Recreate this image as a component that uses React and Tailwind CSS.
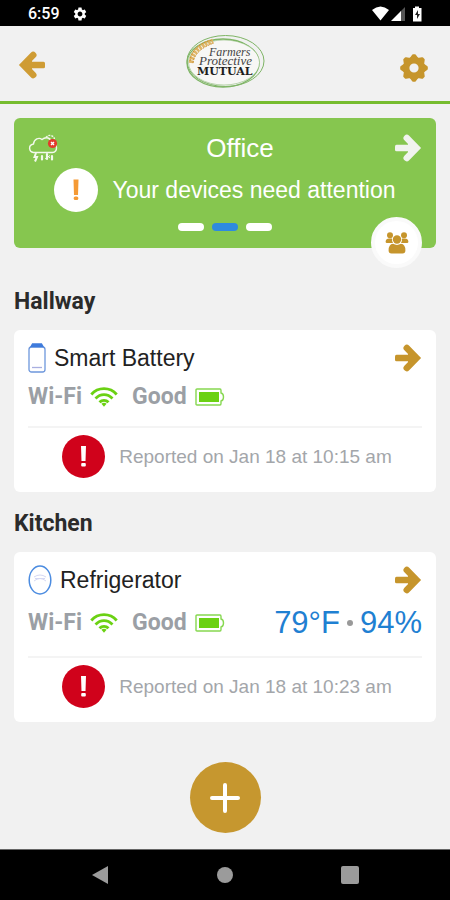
import React from 'react';
import { MdSettings } from 'react-icons/md';

const devices = [
    {
        id: 1,
        room: 'Hallway',
        name: 'Smart Battery',
        icon: 'battery',
        battery: 'Good',
        reported: 'Reported on Jan 18 at 10:15 am',
    },
    {
        id: 2,
        room: 'Kitchen',
        name: 'Refrigerator',
        icon: 'sensor',
        battery: 'Good',
        temperature: '79°F',
        humidity: '94%',
        reported: 'Reported on Jan 18 at 10:23 am',
    },
];

/**
 * Thick arrow, points right by default
 */
function ArrowIcon({ className }) {
    return (
        <svg viewBox="0 0 28 28" fill="none" stroke="currentColor" className={className} aria-hidden="true">
            <path d="M12.800 4 22.500 14 12.800 24" strokeWidth="6.600" strokeLinecap="round" strokeLinejoin="miter" />
            <path d="M14 6V22L21 14Z" fill="currentColor" stroke="none" />
            <rect x="1" y="10.800" width="20" height="6.400" rx="1.500" fill="currentColor" stroke="none" />
        </svg>
    );
}

/**
 * Gear with eight short teeth
 */
function GearIcon({ className }) {
    const angles = [0, 45, 90, 135];

    return (
        <svg viewBox="0 0 28 28" fill="none" stroke="currentColor" className={className} aria-hidden="true">
            <circle cx="14" cy="14" r="7.800" strokeWidth="6.400" />
            {angles.map((angle) => (
                <g key={angle} transform={`rotate(${angle} 14 14)`} fill="currentColor" stroke="none">
                    <path d="M9.400 4.400 12 .900Q12.400 .200 13 .200H15Q15.600 .200 16 .900L18.600 4.400Z" />
                    <path d="M9.400 23.600 12 27.100Q12.400 27.800 13 27.800H15Q15.600 27.800 16 27.100L18.600 23.600Z" />
                </g>
            ))}
        </svg>
    );
}

function Logo() {
    return (
        <svg viewBox="0 0 80 56" className="w-20 h-14" role="img" aria-label="Farmers Protective Mutual">
            <g fill="none" stroke="#7fb566">
                <ellipse cx="40.5" cy="27" rx="38.5" ry="25.5" strokeWidth="1" />
                <ellipse cx="38" cy="29" rx="36" ry="24" strokeWidth="1.3" />
                <ellipse cx="39" cy="28.5" rx="35.5" ry="22.5" strokeWidth=".5" fill="#f7f7f5" />
            </g>
            <path d="M6 29C7 18 15 11 28 7" fill="none" stroke="#e0b566" strokeWidth="4.5" strokeDasharray="2.6 .9" />
            <path d="M5 27C6 17 14 9 27 6M8 29C9 20 17 13 29 9" fill="none" stroke="#cc9233" strokeWidth="1" strokeDasharray="2 1" />
            <g fill="#444" fontFamily='"Liberation Serif", serif'>
                <text x="24" y="22" fontSize="12" fontStyle="italic">Farmers</text>
                <text x="14" y="31" fontSize="13" fontStyle="italic">Protective</text>
                <text x="12" y="41" fontSize="11" fill="#1d1d1d" fontFamily='"DejaVu Serif", serif' fontWeight="bold">MUTUAL</text>
            </g>
        </svg>
    );
}

function StormIcon() {
    return (
        <svg viewBox="0 0 30 28" className="w-[30px] h-7" fill="none" stroke="#f2f9ec" strokeWidth="1.4" aria-hidden="true">
            <path d="M18 3.5Q20 .8 23 1.6Q26 2.4 26.5 5" strokeDasharray="2 1" />
            <path d="M5.5 18.5C.8 17.8-.2 11 5.5 10C6 5 11 3 14 5.500C18 2 23 4 23.500 8.500C30 9 30 18.500 24.500 18.500Z" />
            <path d="M8 19 6.500 23H9L7 27.500" strokeWidth="2" />
            <path d="M14 22V25.500M19 20V25M24 22V25.500" strokeWidth="2.200" strokeLinecap="round" />
            <path d="M19 21.500 22 24M22 21.500 17 25" strokeWidth="1" />
            <circle cx="24.500" cy="9.500" r="4.600" fill="#e33a2c" stroke="none" />
            <path d="M23 8 26 11M26 8 23 11" stroke="#fff" />
        </svg>
    );
}

function MembersIcon() {
    return (
        <svg viewBox="0 0 24 24" className="w-6 h-6" fill="currentColor" aria-hidden="true">
            <circle cx="5" cy="4.300" r="3" />
            <circle cx="19" cy="4.300" r="3" />
            <path d="M.6 10.500Q1 7.500 4 7.500H7Q6.800 11 8 12H2Q.5 12 .6 10.500Z" />
            <path d="M23.400 10.500Q23 7.500 20 7.500H17Q17.200 11 16 12H22Q23.500 12 23.400 10.500Z" />
            <circle cx="12" cy="8.500" r="4.200" />
            <path d="M3.600 19.500Q3.600 13.200 8 12.800Q12 15 16 12.800Q20.400 13.200 20.400 19.500Q20.400 22.500 17.500 22.500H6.500Q3.600 22.500 3.600 19.500Z" />
        </svg>
    );
}

function WifiIcon() {
    return (
        <svg viewBox="0 0 28 20" className="w-7 h-5" fill="none" stroke="#6bd113" strokeWidth="2.800" aria-hidden="true">
            <path d="M1.300 7.500C8-.3 20-.3 26.700 7.500" />
            <path d="M5.500 11.500C10.500 6.300 17.500 6.300 22.500 11.500" />
            <path d="M9.500 15.300C12 12.700 16 12.700 18.500 15.300" />
            <path d="M11.400 16.800Q14 14.900 16.600 16.800L14 19.800Z" fill="#6bd113" stroke="none" />
        </svg>
    );
}

function BatteryIcon() {
    return (
        <svg viewBox="0 0 30 18" className="w-[30px] h-[18px]" fill="none" stroke="#86d850" strokeWidth="1.400" aria-hidden="true">
            <path d="M2 1H25Q26 1 26 2.500V5Q28.500 5.500 28.500 9Q28.500 12.500 26 13V15.500Q26 17 25 17H2Q1 17 1 16V2Q1 1 2 1Z" />
            <rect x="4" y="4" width="20" height="10" fill="#6bd113" stroke="none" />
        </svg>
    );
}

function DeviceIcon({ type }) {
    if (type === 'battery') {
        return (
            <svg viewBox="0 0 18 30" className="w-[18px] h-[30px]" fill="none" stroke="#6d97dc" strokeWidth="1.300" aria-hidden="true">
                <rect x="1" y="4" width="16" height="25" rx="2.500" />
                <path d="M3 3.500 4.500 1H13.500L15 3.500Z" fill="#3f7bdc" stroke="#3f7bdc" />
                <path d="M4 24.500H14" stroke="#a9afe0" />
            </svg>
        );
    }

    return (
        <svg viewBox="0 0 24 30" className="w-6 h-[30px]" fill="none" stroke="#4c8ce0" strokeWidth="1.500" aria-hidden="true">
            <ellipse cx="12" cy="15" rx="10.800" ry="14" />
            <path d="M6 12Q12 8 18 12M6 16Q12 11 18 16M7 13.500H17" stroke="#d5d8f3" strokeWidth="1" />
        </svg>
    );
}

/**
 * Android status bar
 */
function StatusBar() {
    return (
        <div className="h-[26px] bg-black text-white flex items-center justify-between pl-7 pr-[27px] pt-px">
            <div className="flex items-center gap-3">
                <span className="font-[Roboto,sans-serif] font-medium text-base">6:59</span>
                <MdSettings className="w-4 h-4" />
            </div>
            <svg viewBox="0 0 51 16" className="w-[51px] h-4" fill="#fff" aria-hidden="true">
                <path d="M0 4Q8.500-3 17 4L8.500 14.500Z" />
                <path d="M33 1V15H28V6Z" fill="#555" />
                <path d="M29 5V15H19Z" />
                <path d="M43 2V.500H47V2H49.500V15.500H41V2Z" />
                <path d="M46 4 43 9H45V13L48 8H46Z" fill="#222" />
            </svg>
        </div>
    );
}

/**
 * Card for a single device with its last report
 */
function DeviceCard({ device }) {
    return (
        <article className="bg-white rounded-md px-3.5 pt-3 pb-3.5">
            <div className="h-8 flex items-center">
                <DeviceIcon type={device.icon} />
                <h3 className="ml-2 text-[23px] leading-8 text-[#222]">{device.name}</h3>
                <button aria-label={`Open ${device.name}`} className="ml-auto text-[#c6952c]">
                    <ArrowIcon className="w-7 h-7" />
                </button>
            </div>

            <div className="mt-[9px] flex items-center font-[Roboto,sans-serif] font-bold text-[23px] leading-7 text-[#9b9fa5]">
                <span className="mr-2">Wi-Fi</span>
                <WifiIcon />
                <span className="ml-3.5 mr-2">{device.battery}</span>
                <BatteryIcon />
                {device.temperature && (
                    <div className="ml-auto flex items-center gap-[7px] font-['Liberation_Sans',Arial,sans-serif] font-normal text-[31px] leading-9 text-[#1f80d2]">
                        <span>{device.temperature}</span>
                        <span className="w-1.5 h-1.5 rounded-full bg-[#999]"></span>
                        <span>{device.humidity}</span>
                    </div>
                )}
            </div>

            {/* Last report */}
            <div className="mt-[15px] pt-[7px] pl-1 border-t-2 border-[#f4f4f4] flex items-center justify-center gap-3.5">
                <svg viewBox="0 0 43 43" className="w-[43px] h-[43px] shrink-0" role="img" aria-label="Alert">
                    <circle cx="21.500" cy="21.500" r="21.500" fill="#d0021b" />
                    <path d="M19 11H24L23.500 26H19.500Z" fill="#fff" />
                    <rect x="19.200" y="28" width="4.600" height="3.600" rx="1" fill="#fff" />
                </svg>
                <p className="text-[19px] leading-6 text-[#a3a6aa]">{device.reported}</p>
            </div>
        </article>
    );
}

function App() {
    return (
        <div className="min-h-screen flex flex-col bg-[#f1f1f1] font-['Liberation_Sans',Arial,sans-serif]">
            <StatusBar />

            <header className="h-[78px] pl-[18px] pr-[22px] pb-1 border-b-[3px] border-[#76bc2f] flex items-center justify-between">
                <button aria-label="Back" className="w-8 pt-1.5 text-[#cf9c34]">
                    <ArrowIcon className="w-7 h-7 rotate-180" />
                </button>
                <Logo />
                <button aria-label="Settings" className="pt-3 text-[#c6952c]">
                    <GearIcon className="w-7 h-7" />
                </button>
            </header>

            <main className="flex-1 px-3.5 pt-3.5 pb-4 flex flex-col">
                {/* Location banner */}
                <section className="relative bg-[#86c64f] rounded-md px-3.5 pt-2.5 pb-[17px] text-white">
                    <div className="h-10 flex items-center justify-between">
                        <StormIcon />
                        <h1 className="pl-7 text-[26px] leading-8">Office</h1>
                        <button aria-label="Open Office" className="text-[#f1f3ef]">
                            <ArrowIcon className="w-7 h-7" />
                        </button>
                    </div>
                    <div className="flex items-center justify-center gap-3.5">
                        <svg viewBox="0 0 44 44" className="w-11 h-11 shrink-0" role="img" aria-label="Warning">
                            <circle cx="22" cy="22" r="22" fill="#fff" />
                            <path d="M19.500 11.500H24.500L24 27H20Z" fill="#f59a35" />
                            <rect x="19.700" y="28.500" width="4.600" height="3.600" rx="1.500" fill="#f59a35" />
                        </svg>
                        <p className="text-[23px] leading-8">Your devices need attention</p>
                    </div>
                    <div className="mt-[11px] flex justify-center gap-2">
                        <span className="w-[26px] h-2 rounded-full bg-white"></span>
                        <span className="w-[26px] h-2 rounded-full bg-[#2e8ae0]"></span>
                        <span className="w-[26px] h-2 rounded-full bg-white"></span>
                    </div>
                    <button
                        aria-label="Members"
                        className="absolute right-3.5 -bottom-5 w-[51px] h-[51px] rounded-full bg-white border-4 border-[#fafafa] text-[#c6952c] flex items-center justify-center"
                    >
                        <MembersIcon />
                    </button>
                </section>

                <div className="mt-10 flex flex-col gap-[18px]">
                    {devices.map((device) => (
                        <section key={device.id}>
                            <h2 className="mb-3.5 font-[Roboto,sans-serif] font-bold text-[23px] leading-7 text-[#2b2b2b]">
                                {device.room}
                            </h2>
                            <DeviceCard device={device} />
                        </section>
                    ))}
                </div>

                <button
                    aria-label="Add device"
                    className="mt-auto self-center w-[71px] h-[71px] rounded-full bg-[#c6972f] text-white flex items-center justify-center"
                >
                    <svg viewBox="0 0 30 30" className="w-[30px] h-[30px]" fill="none" stroke="currentColor" strokeWidth="4" strokeLinecap="round" aria-hidden="true">
                        <path d="M15 2V28M2 15H28" />
                    </svg>
                </button>
            </main>

            {/* Android navigation bar */}
            <nav className="h-[51px] bg-black border-t border-[#666] text-[#9b9b9b] flex items-center justify-between px-[91px]">
                <button aria-label="Navigate back">
                    <svg viewBox="0 0 18 18" className="w-[18px] h-[18px]" fill="currentColor">
                        <path d="M1 9 17 0V18Z" />
                    </svg>
                </button>
                <button aria-label="Home" className="w-4 h-4 rounded-full bg-[#9b9b9b]"></button>
                <button aria-label="Recent apps" className="w-[18px] h-[18px] rounded-xs bg-[#9b9b9b]"></button>
            </nav>
        </div>
    );
}

export default App;
